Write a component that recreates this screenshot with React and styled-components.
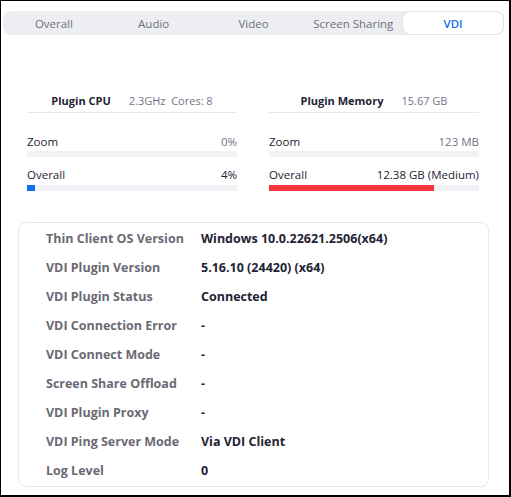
import styled, { createGlobalStyle } from "styled-components";

const GlobalStyle = createGlobalStyle`
  html, body {
    margin: 0;
    padding: 0;
    background: #ffffff;
  }
  * {
    box-sizing: border-box;
  }
`;

const Frame = styled.div`
  width: 511px;
  height: 497px;
  background: #ffffff;
  border-style: solid;
  border-color: #000000;
  border-width: 1px 2px 2px 1px;
  font-family: "Open Sans", "Liberation Sans", sans-serif;
  color: #232333;
  display: flex;
  flex-direction: column;
`;

const TabBar = styled.div`
  margin: 10px 5px 0 2px;
  height: 24px;
  padding: 1px;
  border-radius: 8px;
  background: #edeef2;
  display: grid;
  grid-template-columns: repeat(5, 1fr);
`;

const Tab = styled.div`
  display: flex;
  align-items: center;
  justify-content: center;
  border-radius: 7px;
  font-size: 11.5px;
  color: ${(p) => (p.$active ? "#0e72ed" : "#6e6e7e")};
  font-weight: ${(p) => (p.$active ? 600 : 400)};
  background: ${(p) => (p.$active ? "#ffffff" : "transparent")};
  box-shadow: ${(p) => (p.$active ? "0 0 0 1px #e4e5ec" : "none")};
`;

const Stats = styled.div`
  display: grid;
  grid-template-columns: 210px 210px;
  column-gap: 32px;
  margin: 55px 0 0 26px;
`;

const StatColumn = styled.div`
  display: flex;
  flex-direction: column;
`;

const StatHeader = styled.div`
  display: flex;
  justify-content: center;
  gap: 18px;
  height: 23px;
  line-height: 22px;
  font-size: 11px;
  border-bottom: 1px solid #e6e8f0;
`;

const HeaderTitle = styled.span`
  font-weight: 700;
  color: #232333;
`;

const HeaderInfo = styled.span`
  color: #747487;
  white-space: pre;
`;

const MeterRow = styled.div`
  display: flex;
  justify-content: space-between;
  font-size: 11.5px;
  line-height: 18px;
  margin-top: ${(p) => p.$gap}px;
`;

const MeterValue = styled.span`
  color: ${(p) => (p.$muted ? "#747487" : "#232333")};
`;

const Track = styled.div`
  height: 6px;
  margin-top: ${(p) => p.$offset || 0}px;
  background: #f1f2f6;
`;

const Fill = styled.div`
  height: 100%;
  background: ${(p) => p.$color};
`;

const InfoCard = styled.div`
  margin: 31px 20px 0 17px;
  border: 1px solid #e6e7ee;
  border-radius: 8px;
  padding: 1px 0 1px 27px;
`;

const InfoRow = styled.div`
  display: grid;
  grid-template-columns: 155px 1fr;
  height: 29px;
  align-items: center;
  font-size: 12.5px;
  font-weight: 700;
`;

const InfoLabel = styled.span`
  color: #6a6a74;
`;

const InfoValue = styled.span`
  color: #232333;
`;

const tabs = ["Overall", "Audio", "Video", "Screen Sharing", "VDI"];

const meters = [
  {
    title: "Plugin CPU",
    info: "2.3GHz  Cores: 8",
    rows: [
      { name: "Zoom", value: "0%", muted: true, pct: 0, color: "#0e72ed" },
      { name: "Overall", value: "4%", muted: false, pct: 4, color: "#0e72ed" },
    ],
  },
  {
    title: "Plugin Memory",
    info: "15.67 GB",
    rows: [
      { name: "Zoom", value: "123 MB", muted: true, pct: 0, color: "#f5373d" },
      {
        name: "Overall",
        value: "12.38 GB (Medium)",
        muted: false,
        pct: 78.6,
        color: "#f5373d",
      },
    ],
  },
];

const info = [
  ["Thin Client OS Version", "Windows 10.0.22621.2506(x64)"],
  ["VDI Plugin Version", "5.16.10 (24420) (x64)"],
  ["VDI Plugin Status", "Connected"],
  ["VDI Connection Error", "-"],
  ["VDI Connect Mode", "-"],
  ["Screen Share Offload", "-"],
  ["VDI Plugin Proxy", "-"],
  ["VDI Ping Server Mode", "Via VDI Client"],
  ["Log Level", "0"],
];

export default function App() {
  return (
    <>
      <GlobalStyle />
      <Frame>
        <TabBar>
          {tabs.map((t) => (
            <Tab key={t} $active={t === "VDI"}>
              {t}
            </Tab>
          ))}
        </TabBar>

        <Stats>
          {meters.map((m) => (
            <StatColumn key={m.title}>
              <StatHeader>
                <HeaderTitle>{m.title}</HeaderTitle>
                <HeaderInfo>{m.info}</HeaderInfo>
              </StatHeader>
              {m.rows.map((r, i) => (
                <div key={r.name}>
                  <MeterRow $gap={i === 0 ? 20 : 9}>
                    <span>{r.name}</span>
                    <MeterValue $muted={r.muted}>{r.value}</MeterValue>
                  </MeterRow>
                  <Track $offset={i === 0 ? 0 : 1}>
                    <Fill $color={r.color} style={{ width: `${r.pct}%` }} />
                  </Track>
                </div>
              ))}
            </StatColumn>
          ))}
        </Stats>

        <InfoCard>
          {info.map(([label, value]) => (
            <InfoRow key={label}>
              <InfoLabel>{label}</InfoLabel>
              <InfoValue>{value}</InfoValue>
            </InfoRow>
          ))}
        </InfoCard>
      </Frame>
    </>
  );
}
